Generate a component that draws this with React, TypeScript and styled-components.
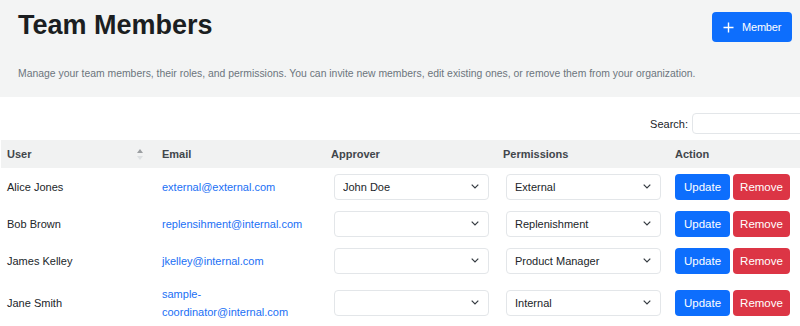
import React from "react";
import styled, { createGlobalStyle } from "styled-components";

const GlobalStyle = createGlobalStyle`
  html, body {
    margin: 0;
    padding: 0;
    background: #ffffff;
    overflow: hidden;
    font-family: "Liberation Sans", Arial, Helvetica, sans-serif;
    color: #212529;
  }
  * { box-sizing: border-box; }
`;

const Page = styled.div`
  width: 800px;
  overflow: hidden;
`;

const Header = styled.header`
  background: #f3f4f4;
  padding: 12px 8px 15px 18px;
`;

const TopRow = styled.div`
  display: flex;
  justify-content: space-between;
  align-items: flex-start;
`;

const Title = styled.h1`
  margin: -2px 0 0 0;
  font-size: 27px;
  line-height: 30px;
  font-weight: 700;
  color: #1b1e21;
`;

const PrimaryButton = styled.button`
  display: inline-flex;
  align-items: center;
  gap: 8px;
  height: 30px;
  width: 80px;
  padding: 0 0 0 11px;
  border: none;
  border-radius: 4px;
  background: #0d6efd;
  color: #ffffff;
  font-family: inherit;
  font-size: 11px;
  letter-spacing: -0.2px;
  cursor: pointer;
`;

const Description = styled.p`
  margin: 24px 0 0 0;
  font-size: 10.4px;
  line-height: 16px;
  color: #6c757d;
`;

const SearchBar = styled.div`
  display: flex;
  justify-content: flex-end;
  align-items: center;
  gap: 4px;
  margin: 16px -16px 6px 0;
`;

const SearchLabel = styled.label`
  font-size: 11px;
  color: #212529;
`;

const SearchInput = styled.input`
  width: 124px;
  height: 21px;
  border: 1px solid #e3e6e9;
  border-radius: 4px;
  background: #fff;
`;

const Table = styled.table`
  border-collapse: collapse;
  margin-left: 1px;
  width: 799px;
  table-layout: fixed;
`;

const Th = styled.th<{ $w: number }>`
  width: ${(p) => p.$w}px;
  height: 28px;
  padding: 0 6px;
  background: #f1f2f2;
  text-align: left;
  font-size: 11px;
  font-weight: 700;
  color: #41464b;
`;

const SortWrap = styled.span`
  display: flex;
  justify-content: space-between;
  align-items: center;
  padding-right: 7px;
`;

const Td = styled.td`
  padding: 5.5px 6px;
  font-size: 11px;
  line-height: 18px;
  vertical-align: middle;
  color: #212529;
`;

const EmailLink = styled.a`
  color: #1a6ff5;
  text-decoration: none;
`;

const SelectWrap = styled.div`
  position: relative;
  width: 155px;
  margin-left: 3px;
`;

const Select = styled.select`
  appearance: none;
  -webkit-appearance: none;
  width: 100%;
  height: 26px;
  padding: 0 24px 0 8px;
  border: 1px solid #e3e6e9;
  border-radius: 4px;
  background: #fff;
  font-family: inherit;
  font-size: 11px;
  color: #212529;
  outline: none;
`;

const Chevron = styled.svg`
  position: absolute;
  right: 10px;
  top: 50%;
  margin-top: -3px;
  pointer-events: none;
`;

const Actions = styled.div`
  display: flex;
  gap: 3px;
`;

const ActionButton = styled.button<{ $variant: "primary" | "danger"; $w: number }>`
  height: 26px;
  width: ${(p) => p.$w}px;
  padding: 0;
  border: none;
  border-radius: 4px;
  background: ${(p) => (p.$variant === "primary" ? "#0d6efd" : "#dc3545")};
  color: #fff;
  font-family: inherit;
  font-size: 11.5px;
  cursor: pointer;
`;

const SortIcon = () => (
  <svg width="6" height="11" viewBox="0 0 6 11">
    <path d="M3 0 L6 4 L0 4 Z" fill="#9b9ea1" />
    <path d="M3 11 L6 7 L0 7 Z" fill="#dcdfe1" />
  </svg>
);

const PlusIcon = () => (
  <svg width="11" height="11" viewBox="0 0 11 11">
    <path d="M5.5 0.5 V10.5 M0.5 5.5 H10.5" stroke="#fff" strokeWidth="1.4" fill="none" />
  </svg>
);

const DropdownSelect = ({ value, options }: { value: string; options: string[] }) => (
  <SelectWrap>
    <Select defaultValue={value}>
      {options.map((o) => (
        <option key={o} value={o}>
          {o}
        </option>
      ))}
    </Select>
    <Chevron width="8" height="5" viewBox="0 0 8 5">
      <path d="M0.7 0.7 L4 4 L7.3 0.7" stroke="#343a40" strokeWidth="1.2" fill="none" />
    </Chevron>
  </SelectWrap>
);

const approvers = ["", "John Doe"];
const permissions = ["External", "Replenishment", "Product Manager", "Internal"];

const members = [
  { name: "Alice Jones", email: "external@external.com", approver: "John Doe", perm: "External" },
  { name: "Bob Brown", email: "replensihment@internal.com", approver: "", perm: "Replenishment" },
  { name: "James Kelley", email: "jkelley@internal.com", approver: "", perm: "Product Manager" },
  { name: "Jane Smith", email: "sample-coordinator@internal.com", approver: "", perm: "Internal" },
];

export default function App() {
  return (
    <Page>
      <GlobalStyle />
      <Header>
        <TopRow>
          <Title>Team Members</Title>
          <PrimaryButton>
            <PlusIcon />
            Member
          </PrimaryButton>
        </TopRow>
        <Description>
          Manage your team members, their roles, and permissions. You can invite new members, edit existing ones, or
          remove them from your organization.
        </Description>
      </Header>
      <SearchBar>
        <SearchLabel>Search:</SearchLabel>
        <SearchInput type="text" />
      </SearchBar>
      <Table>
        <thead>
          <tr>
            <Th $w={155}>
              <SortWrap>
                User
                <SortIcon />
              </SortWrap>
            </Th>
            <Th $w={169}>Email</Th>
            <Th $w={172}>Approver</Th>
            <Th $w={172}>Permissions</Th>
            <Th $w={131}>Action</Th>
          </tr>
        </thead>
        <tbody>
          {members.map((m) => (
            <tr key={m.name}>
              <Td>{m.name}</Td>
              <Td>
                <EmailLink href="#">{m.email}</EmailLink>
              </Td>
              <Td>
                <DropdownSelect value={m.approver} options={approvers} />
              </Td>
              <Td>
                <DropdownSelect value={m.perm} options={permissions} />
              </Td>
              <Td>
                <Actions>
                  <ActionButton $variant="primary" $w={55}>
                    Update
                  </ActionButton>
                  <ActionButton $variant="danger" $w={57}>
                    Remove
                  </ActionButton>
                </Actions>
              </Td>
            </tr>
          ))}
        </tbody>
      </Table>
    </Page>
  );
}
